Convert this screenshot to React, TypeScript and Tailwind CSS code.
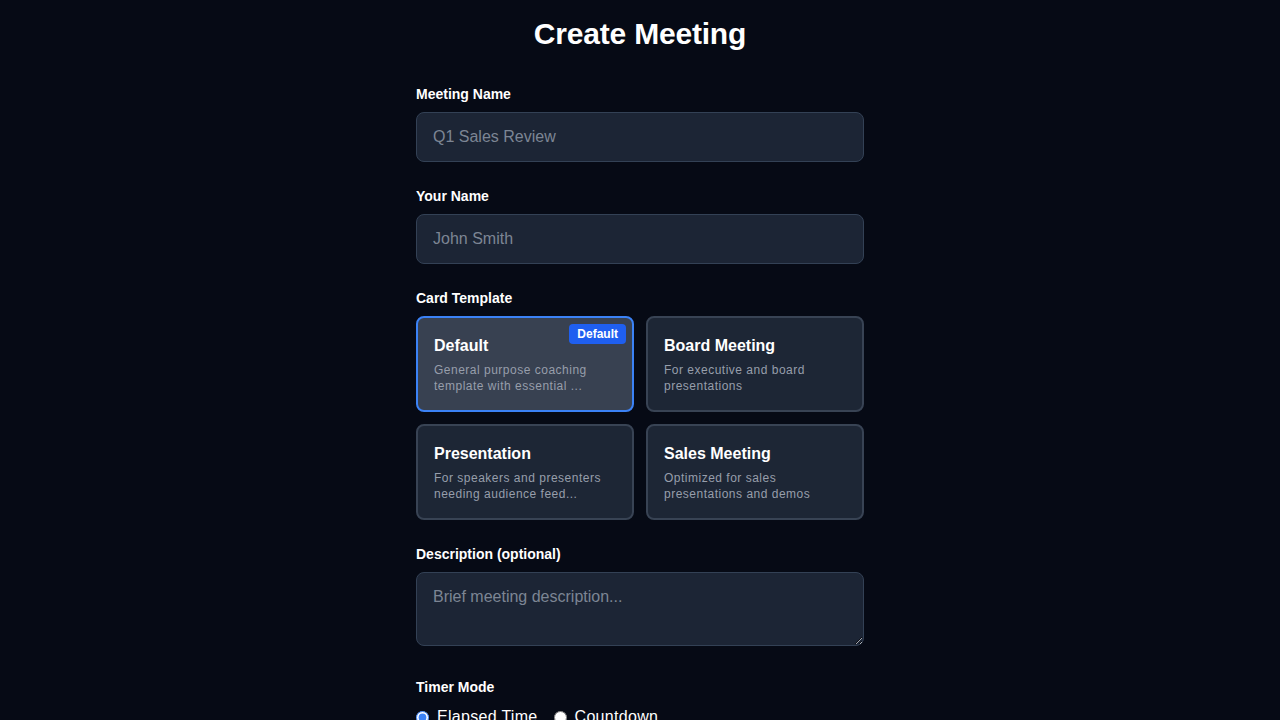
import React, { useState } from "react";

type Template = { id: string; name: string; desc: string };

const templates: Template[] = [
  { id: "default", name: "Default", desc: "General purpose coaching template with essential ..." },
  { id: "board", name: "Board Meeting", desc: "For executive and board presentations" },
  { id: "presentation", name: "Presentation", desc: "For speakers and presenters needing audience feed..." },
  { id: "sales", name: "Sales Meeting", desc: "Optimized for sales presentations and demos" },
];

export default function App() {
  const [selected, setSelected] = useState("default");
  const [mode, setMode] = useState("elapsed");

  return (
    <div
      className="min-h-screen bg-[#060a15] text-white"
      style={{ fontFamily: '"Liberation Sans", Arial, sans-serif' }}
    >
      <div className="mx-auto w-[448px] pt-4 pb-10">
        <h1 className="mb-8 text-center text-[30px] leading-9 font-bold tracking-[-0.2px]">
          Create Meeting
        </h1>

        <div className="flex flex-col gap-6">
          <div>
            <label className="mb-2 block text-sm leading-5 font-bold">Meeting Name</label>
            <input
              placeholder="Q1 Sales Review"
              className="block h-[50px] w-full rounded-lg border border-[#334155] bg-[#1c2535] px-4 py-3 text-base leading-6 text-white placeholder:text-[#7c8594] outline-none"
            />
          </div>

          <div>
            <label className="mb-2 block text-sm leading-5 font-bold">Your Name</label>
            <input
              placeholder="John Smith"
              className="block h-[50px] w-full rounded-lg border border-[#334155] bg-[#1c2535] px-4 py-3 text-base leading-6 text-white placeholder:text-[#7c8594] outline-none"
            />
          </div>

          <div>
            <label className="mb-2 block text-sm leading-5 font-bold">Card Template</label>
            <div className="grid grid-cols-2 gap-3">
              {templates.map((t) => {
                const active = t.id === selected;
                return (
                  <button
                    key={t.id}
                    onClick={() => setSelected(t.id)}
                    className={
                      active
                        ? "relative h-24 rounded-lg border-2 border-[#3b82f6] bg-[#384151] px-4 py-4 text-left"
                        : "relative h-24 rounded-lg border-2 border-[#384354] bg-[#1d2635] px-4 py-4 text-left"
                    }
                  >
                    {active && (
                      <span className="absolute top-[6px] right-[6px] rounded bg-[#1f5ff0] px-2 py-[2px] text-xs leading-4 font-bold text-white">
                        Default
                      </span>
                    )}
                    <div className="text-base leading-6 font-bold text-white">{t.name}</div>
                    <div className="mt-1 line-clamp-2 text-xs leading-4 tracking-[0.5px] text-[#979eab]">
                      {t.desc}
                    </div>
                  </button>
                );
              })}
            </div>
          </div>

          <div className="pb-[7px]">
            <label className="mb-2 block text-sm leading-5 font-bold">Description (optional)</label>
            <textarea
              rows={2}
              placeholder="Brief meeting description..."
              className="block w-full resize-y rounded-lg border border-[#334155] bg-[#1c2535] px-4 py-3 text-base leading-6 text-white placeholder:text-[#7c8594] outline-none"
            />
          </div>

          <div>
            <label className="mb-2 block text-sm leading-5 font-bold">Timer Mode</label>
            <div className="flex items-center text-base leading-6">
              <label className="mr-4 flex items-center gap-2">
                <input
                  type="radio"
                  name="mode"
                  checked={mode === "elapsed"}
                  onChange={() => setMode("elapsed")}
                  className="h-[13px] w-[13px] accent-[#3b82f6]"
                />
                <span className="tracking-[0.3px]">Elapsed Time</span>
              </label>
              <label className="flex items-center gap-2">
                <input
                  type="radio"
                  name="mode"
                  checked={mode === "countdown"}
                  onChange={() => setMode("countdown")}
                  className="h-[13px] w-[13px] accent-[#3b82f6]"
                />
                <span className="tracking-[0.3px]">Countdown</span>
              </label>
            </div>
          </div>
        </div>
      </div>
    </div>
  );
}
